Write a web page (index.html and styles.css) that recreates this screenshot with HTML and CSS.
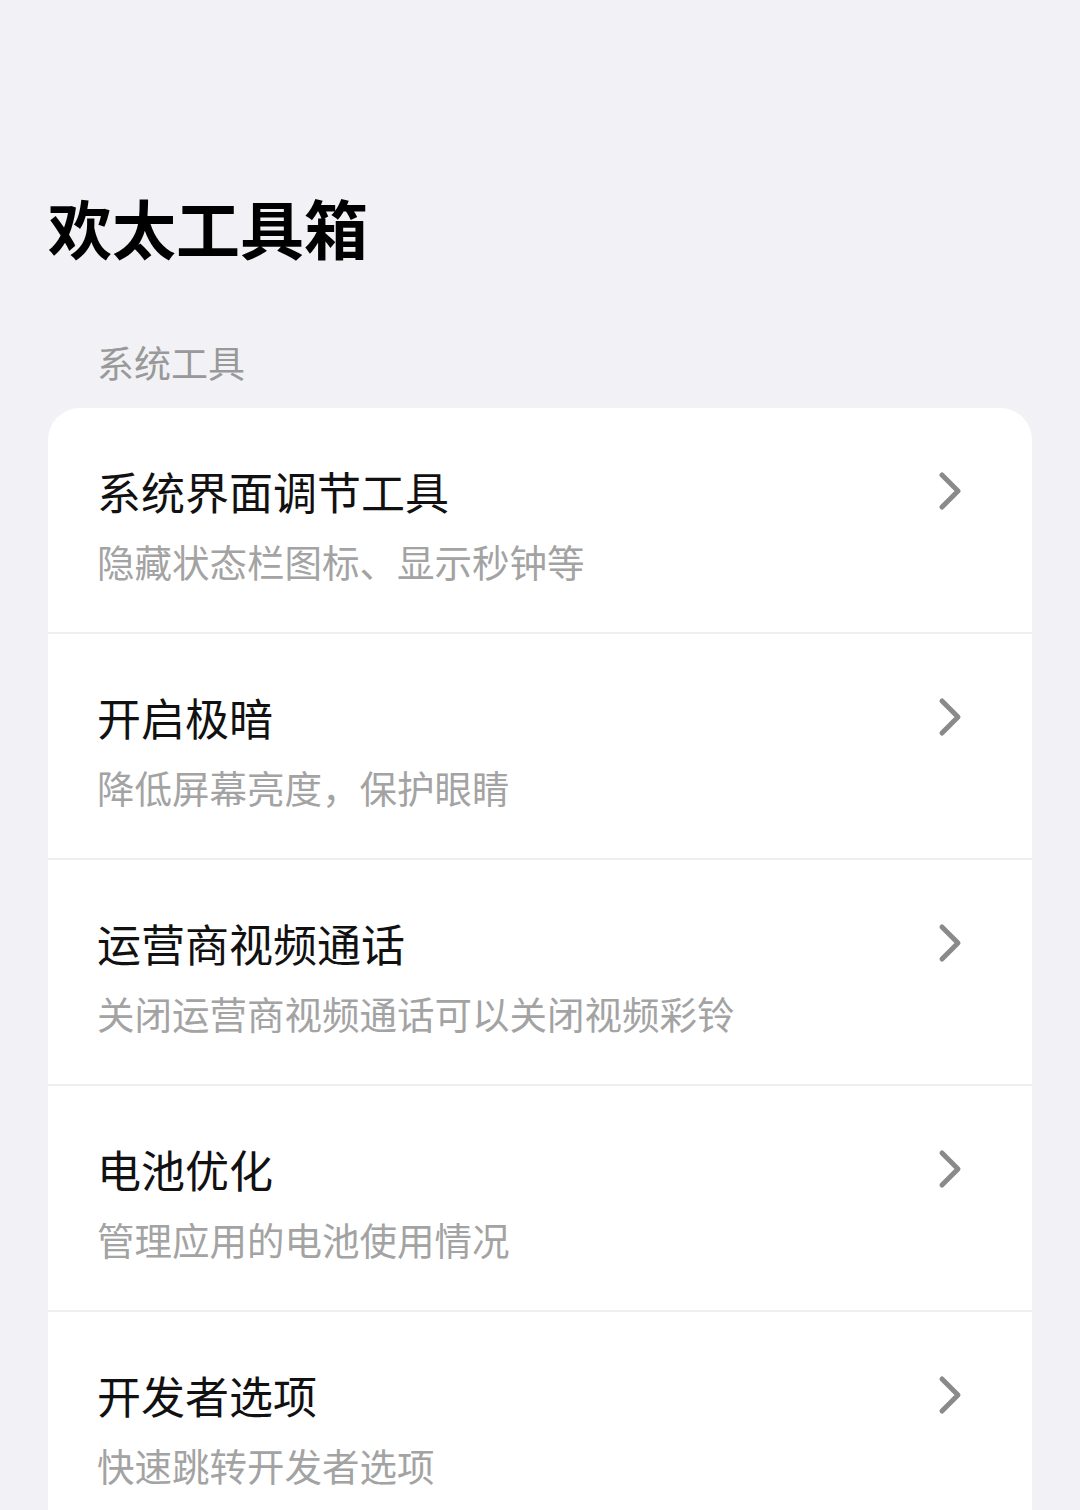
FILE: index.html
```html
<!DOCTYPE html>
<html lang="zh-CN">
<head>
    <meta charset="UTF-8">
    <meta name="viewport" content="width=device-width, initial-scale=1.0">
    <title>欢太工具箱</title>
    <link rel="stylesheet" href="styles.css">
</head>
<body>
<header class="page-header">
    <h1>欢太工具箱</h1>
</header>

<main class="content">
    <div class="section-label">系统工具</div>

    <div class="card">
        <div class="row">
            <div class="row-head">
                <span class="row-title">系统界面调节工具</span>
                <svg class="chevron" viewBox="0 0 24 40"><polyline points="4,4 20,20 4,36"/></svg>
            </div>
            <div class="row-desc">隐藏状态栏图标、显示秒钟等</div>
        </div>
        <div class="row">
            <div class="row-head">
                <span class="row-title">开启极暗</span>
                <svg class="chevron" viewBox="0 0 24 40"><polyline points="4,4 20,20 4,36"/></svg>
            </div>
            <div class="row-desc">降低屏幕亮度，保护眼睛</div>
        </div>
        <div class="row">
            <div class="row-head">
                <span class="row-title">运营商视频通话</span>
                <svg class="chevron" viewBox="0 0 24 40"><polyline points="4,4 20,20 4,36"/></svg>
            </div>
            <div class="row-desc">关闭运营商视频通话可以关闭视频彩铃</div>
        </div>
        <div class="row">
            <div class="row-head">
                <span class="row-title">电池优化</span>
                <svg class="chevron" viewBox="0 0 24 40"><polyline points="4,4 20,20 4,36"/></svg>
            </div>
            <div class="row-desc">管理应用的电池使用情况</div>
        </div>
        <div class="row">
            <div class="row-head">
                <span class="row-title">开发者选项</span>
                <svg class="chevron" viewBox="0 0 24 40"><polyline points="4,4 20,20 4,36"/></svg>
            </div>
            <div class="row-desc">快速跳转开发者选项</div>
        </div>
    </div>
</main>
</body>
</html>
```

FILE: styles.css
```css
body {
    margin: 0;
    padding: 0;
    background-color: #f2f2f6;
    color: #111;
    font-family: "Noto Sans CJK SC", "Noto Sans", sans-serif;
}

.page-header {
    padding: 186px 48px 0;
}

.page-header h1 {
    margin: 0;
    font-size: 64px;
    line-height: 80px;
    font-weight: 700;
    color: #000;
}

.content {
    padding: 0 48px;
}

.section-label {
    margin-top: 71px;
    padding-left: 49px;
    font-size: 37px;
    line-height: 50px;
    color: #999;
}

.card {
    margin-top: 21px;
    background: #fff;
    border-radius: 32px 32px 0 0;
    overflow: hidden;
}

.row {
    height: 226px;
    box-sizing: border-box;
    padding: 55px 70px 0 49px;
    border-bottom: 2px solid #efeff1;
}

.row-head {
    display: flex;
    align-items: center;
    justify-content: space-between;
}

.row-title {
    font-size: 44px;
    line-height: 56px;
    color: #111;
}

.chevron {
    width: 24px;
    height: 40px;
    fill: none;
    stroke: #8a8a8a;
    stroke-width: 5;
    stroke-linecap: round;
    stroke-linejoin: round;
}

.row-desc {
    margin-top: 16px;
    font-size: 37.5px;
    line-height: 52px;
    color: #a3a3a3;
}
```
